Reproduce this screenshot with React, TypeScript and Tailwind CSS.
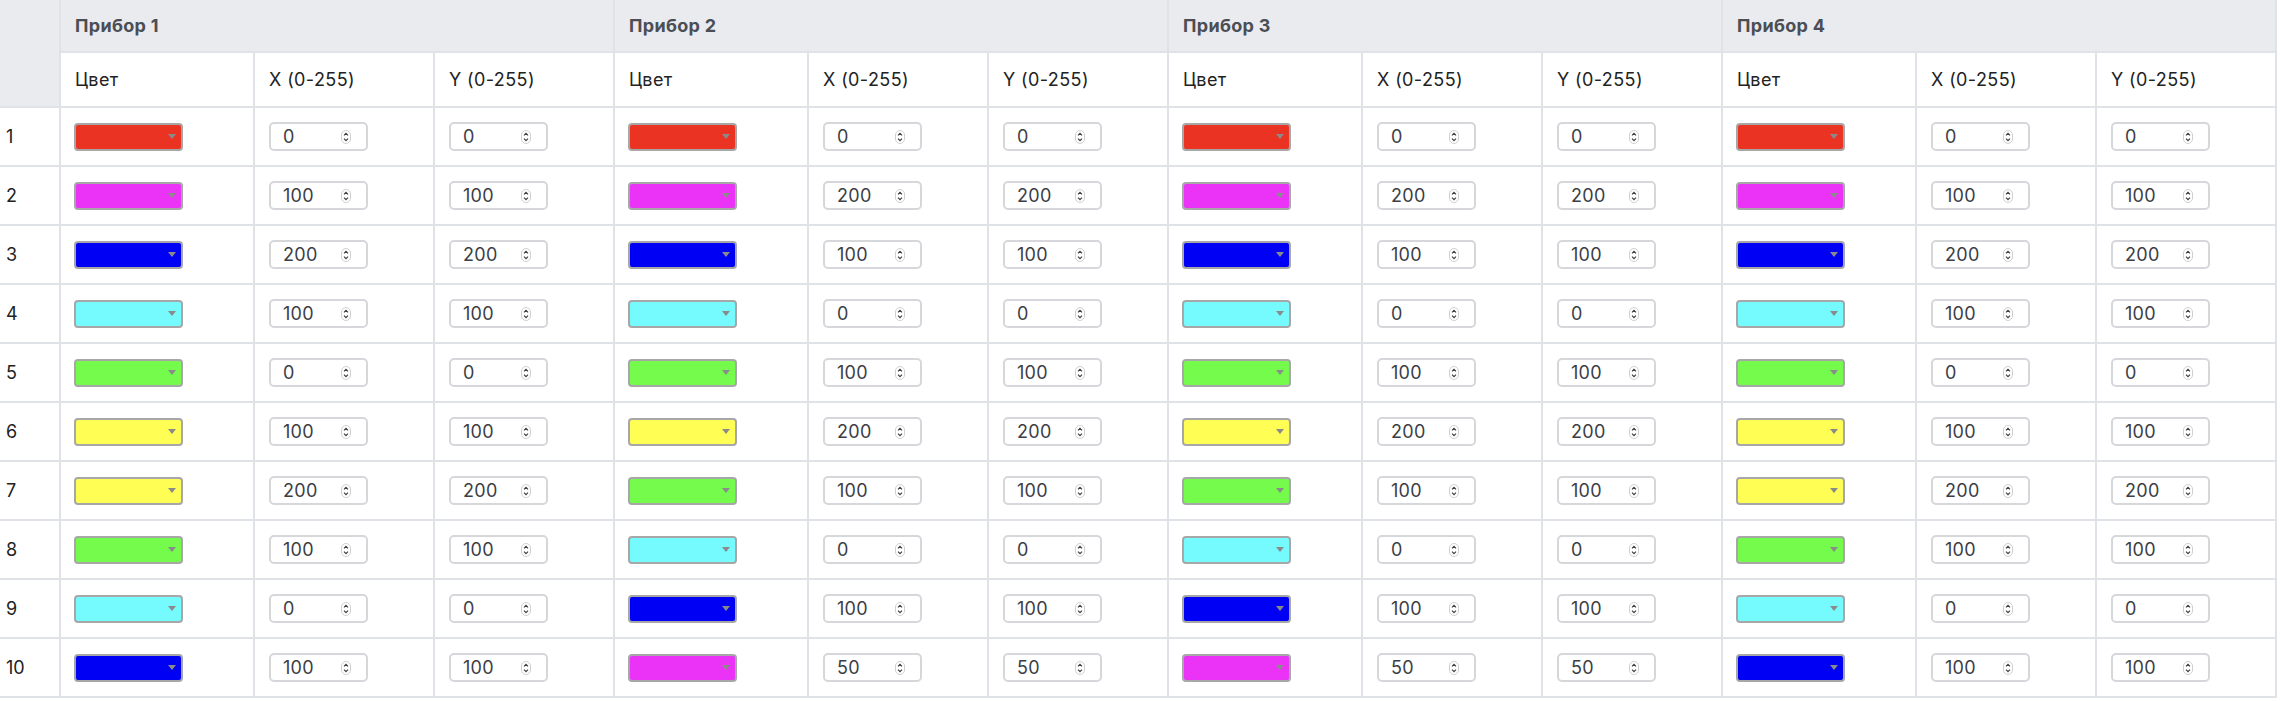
import React from "react";

const C: Record<string, string> = {
  r: "#ea3323",
  m: "#ea33f7",
  b: "#0000f5",
  c: "#75fbfd",
  g: "#75fb4c",
  y: "#fffe55",
};

type Cell = [string, number, number];
const rows: Cell[][] = [
  [["r", 0, 0], ["r", 0, 0], ["r", 0, 0], ["r", 0, 0]],
  [["m", 100, 100], ["m", 200, 200], ["m", 200, 200], ["m", 100, 100]],
  [["b", 200, 200], ["b", 100, 100], ["b", 100, 100], ["b", 200, 200]],
  [["c", 100, 100], ["c", 0, 0], ["c", 0, 0], ["c", 100, 100]],
  [["g", 0, 0], ["g", 100, 100], ["g", 100, 100], ["g", 0, 0]],
  [["y", 100, 100], ["y", 200, 200], ["y", 200, 200], ["y", 100, 100]],
  [["y", 200, 200], ["g", 100, 100], ["g", 100, 100], ["y", 200, 200]],
  [["g", 100, 100], ["c", 0, 0], ["c", 0, 0], ["g", 100, 100]],
  [["c", 0, 0], ["b", 100, 100], ["b", 100, 100], ["c", 0, 0]],
  [["b", 100, 100], ["m", 50, 50], ["m", 50, 50], ["b", 100, 100]],
];

function Spinner() {
  return (
    <svg width="10" height="14" viewBox="0 0 10 14" className="shrink-0">
      <rect x="0.5" y="0.5" width="9" height="13" rx="4.5" fill="#fff" stroke="#cfcfcf" />
      <path d="M3 5.3 L5 3.3 L7 5.3" fill="none" stroke="#3f3f3f" strokeWidth="1.2" />
      <path d="M3 8.7 L5 10.7 L7 8.7" fill="none" stroke="#3f3f3f" strokeWidth="1.2" />
    </svg>
  );
}

function ColorSelect({ color }: { color: string }) {
  return (
    <div
      className="w-[109px] h-[28px] rounded-[4px] border-2 border-[#a7a7a7] flex items-center justify-end pr-[5px]"
      style={{ backgroundColor: color }}
    >
      <div className="w-0 h-0 border-l-[4px] border-r-[4px] border-t-[5px] border-l-transparent border-r-transparent border-t-[#8a8a8a]" />
    </div>
  );
}

function NumInput({ value }: { value: number }) {
  return (
    <div className="w-[99px] h-[29px] rounded-[5px] border-2 border-[#d5d7db] bg-white flex items-center pl-[12px] pr-[15px] justify-between">
      <span className="text-[18px] text-[#3b3e44] leading-none tracking-[0.3px]">{value}</span>
      <Spinner />
    </div>
  );
}

export default function App() {
  const groups = [1, 2, 3, 4];
  return (
    <div className="w-[2280px] h-[701px] bg-white font-['Inter',sans-serif]">
      <div className="w-[2277px] bg-[#dfe2e6] grid gap-[2px] pr-[2px] pb-[2px] grid-cols-[59px_192px_178px_178px_192px_178px_178px_192px_178px_178px_192px_178px_178px] grid-rows-[51px_53px_repeat(10,57px)]">
        <div className="row-span-2 bg-[#e9ebef]" />
        {groups.map((g) => (
          <div
            key={`h${g}`}
            className="col-span-3 bg-[#e9ebef] flex items-center pl-[14px] text-[18px] font-bold text-[#4b4e54] tracking-[0.3px]"
          >
            Прибор {g}
          </div>
        ))}
        {groups.map((g) => (
          <React.Fragment key={`s${g}`}>
            <div className="bg-white flex items-center pl-[14px] text-[18px] text-[#222] tracking-[0.4px]">Цвет</div>
            <div className="bg-white flex items-center pl-[14px] text-[18px] text-[#222] tracking-[0.4px]">X (0-255)</div>
            <div className="bg-white flex items-center pl-[14px] text-[18px] text-[#222] tracking-[0.4px]">Y (0-255)</div>
          </React.Fragment>
        ))}
        {rows.map((row, i) => (
          <React.Fragment key={`r${i}`}>
            <div className="bg-white flex items-center pl-[6px] text-[18px] text-[#222]">{i + 1}</div>
            {row.map((cell, j) => (
              <React.Fragment key={`c${i}-${j}`}>
                <div className="bg-white flex items-center pl-[13px]">
                  <ColorSelect color={C[cell[0]]} />
                </div>
                <div className="bg-white flex items-center pl-[14px]">
                  <NumInput value={cell[1]} />
                </div>
                <div className="bg-white flex items-center pl-[14px]">
                  <NumInput value={cell[2]} />
                </div>
              </React.Fragment>
            ))}
          </React.Fragment>
        ))}
      </div>
    </div>
  );
}
